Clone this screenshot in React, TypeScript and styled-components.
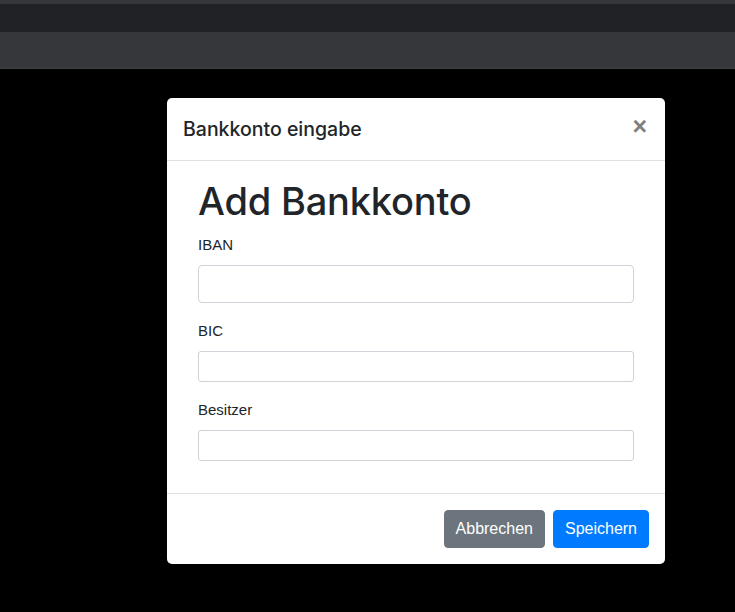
import styled, { createGlobalStyle } from 'styled-components';

const GlobalStyle = createGlobalStyle`
  html, body {
    margin: 0;
    padding: 0;
    height: 100%;
    background: #000;
  }
  #root {
    min-height: 100%;
    display: flex;
    flex-direction: column;
  }
  * {
    box-sizing: border-box;
  }
  body {
    font-family: 'Liberation Sans', Arial, Helvetica, sans-serif;
    color: #212529;
  }
`;

const Page = styled.div`
  flex: 1;
  display: flex;
  flex-direction: column;
`;

const TopStrip = styled.div`
  height: 4px;
  background: #36373b;
`;

const NavBar = styled.div`
  height: 28px;
  background: #212226;
`;

const SubBar = styled.div`
  height: 37px;
  background: #36373b;
  border-bottom: 1px solid #404145;
`;

const Backdrop = styled.div`
  flex: 1;
  background: #000;
  padding: 29px 0 0 167px;
`;

const Dialog = styled.div`
  width: 498px;
  background: #fff;
  border-radius: 5px;
  display: flex;
  flex-direction: column;
`;

const Header = styled.div`
  display: flex;
  align-items: flex-start;
  padding: 16px;
  border-bottom: 1px solid #dee2e6;
`;

const Title = styled.h5`
  margin: 0;
  font-family: Inter, 'Liberation Sans', sans-serif;
  font-size: 19.5px;
  font-weight: 500;
  line-height: 30px;
  color: #212529;
`;

const CloseButton = styled.button`
  margin: -16px -14px -16px auto;
  padding: 16px;
  background: transparent;
  border: 0;
  font-family: 'Liberation Sans', Arial, sans-serif;
  font-size: 25px;
  font-weight: 700;
  line-height: 1;
  color: #000;
  opacity: 0.5;
  text-shadow: 0 1px 0 #fff;
  cursor: pointer;
`;

const Body = styled.div`
  padding: 16px 31px;
`;

const Heading = styled.h1`
  margin: 0 0 8px;
  font-family: Inter, 'Liberation Sans', sans-serif;
  font-size: 38px;
  font-weight: 500;
  line-height: 48px;
  letter-spacing: -0.2px;
  color: #212529;
`;

const FormGroup = styled.div`
  margin-bottom: 16px;
  display: flex;
  flex-direction: column;
`;

const Label = styled.label`
  font-size: 15px;
  line-height: 24px;
  margin-bottom: 8px;
  color: #212529;
`;

const Input = styled.input<{ $small?: boolean }>`
  display: block;
  width: 100%;
  height: ${(p) => (p.$small ? '31px' : '38px')};
  padding: ${(p) => (p.$small ? '4px 8px' : '6px 12px')};
  font-family: inherit;
  font-size: ${(p) => (p.$small ? '14px' : '16px')};
  color: #495057;
  background: #fff;
  border: 1px solid #ced4da;
  border-radius: ${(p) => (p.$small ? '3px' : '4px')};
  outline: none;
`;

const Footer = styled.div`
  display: flex;
  justify-content: flex-end;
  align-items: center;
  gap: 8px;
  padding: 16px;
  border-top: 1px solid #dee2e6;
`;

const Button = styled.button<{ $variant: 'secondary' | 'primary' }>`
  height: 38px;
  padding: 6px 11px;
  font-family: 'Liberation Sans', Arial, sans-serif;
  font-size: 16px;
  line-height: 24px;
  color: #fff;
  border: 1px solid ${(p) => (p.$variant === 'primary' ? '#007bff' : '#6c757d')};
  background: ${(p) => (p.$variant === 'primary' ? '#007bff' : '#6c757d')};
  border-radius: 4px;
  cursor: pointer;
`;

const fields = [
  { id: 'iban', label: 'IBAN', small: false },
  { id: 'bic', label: 'BIC', small: true },
  { id: 'owner', label: 'Besitzer', small: true },
];

export default function App() {
  return (
    <>
      <GlobalStyle />
      <Page>
        <TopStrip />
        <NavBar />
        <SubBar />
        <Backdrop>
          <Dialog role="dialog">
            <Header>
              <Title>Bankkonto eingabe</Title>
              <CloseButton aria-label="Close">×</CloseButton>
            </Header>
            <Body>
              <Heading>Add Bankkonto</Heading>
              {fields.map((f) => (
                <FormGroup key={f.id}>
                  <Label htmlFor={f.id}>{f.label}</Label>
                  <Input id={f.id} type="text" $small={f.small} />
                </FormGroup>
              ))}
            </Body>
            <Footer>
              <Button $variant="secondary">Abbrechen</Button>
              <Button $variant="primary">Speichern</Button>
            </Footer>
          </Dialog>
        </Backdrop>
      </Page>
    </>
  );
}
